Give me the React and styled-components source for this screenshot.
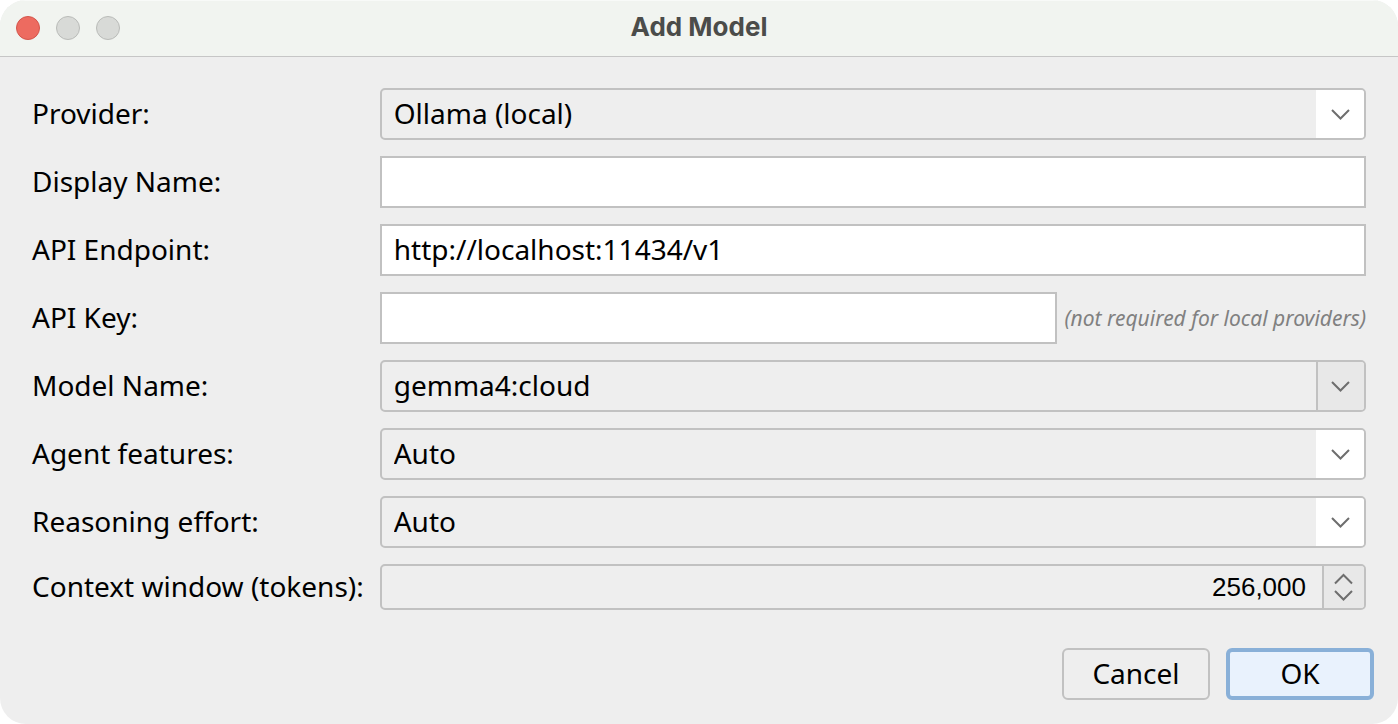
import { useState } from "react";
import styled, { createGlobalStyle, ThemeProvider } from "styled-components";

const theme = {
  colors: {
    window: "#eeeeee",
    titleBar: "#f1f4f0",
    border: "#c1c1c1",
    cell: "#e8e8e8",
    white: "#ffffff",
    text: "#000000",
    title: "#4b4c4a",
    hint: "#808080",
    arrow: "#6e6e6e",
    primary: "#e9f2fd",
    primaryBorder: "#89b0d8",
  },
  fonts: {
    form: '"Noto Sans", sans-serif',
    title: 'Inter, "Liberation Sans", sans-serif',
    number: '"Liberation Sans", Arial, sans-serif',
  },
};

const PROVIDERS = ["Ollama (local)"];
const MODELS = ["gemma4:cloud"];
const LEVELS = ["Auto"];
const TOKEN_STEP = 1000;

const Chevron = ({ up }) => (
  <svg width="20" height="12" viewBox="0 0 20 12" aria-hidden="true">
    <path
      d={up ? "M1 10.5 L9.5 2 L18 10.5" : "M1 2 L9.5 10.5 L18 2"}
      fill="none"
      stroke="currentColor"
      strokeWidth="2"
    />
  </svg>
);

const SelectField = ({ id, label, options, divided }) => {
  const [value, setValue] = useState(options[0]);

  return (
    <>
      <Label htmlFor={id}>{label}</Label>
      <SelectBox>
        <Select id={id} value={value} onChange={(e) => setValue(e.target.value)}>
          {options.map((ele) => (
            <option key={ele} value={ele}>
              {ele}
            </option>
          ))}
        </Select>
        <ArrowCell $divided={divided}>
          <Chevron />
        </ArrowCell>
      </SelectBox>
    </>
  );
};

const App = () => {
  const [name, setName] = useState("");
  const [endpoint, setEndpoint] = useState("http://localhost:11434/v1");
  const [apiKey, setApiKey] = useState("");
  const [tokens, setTokens] = useState(256000);

  const changeTokens = (e) => {
    setTokens(Number(e.target.value.replace(/\D/g, "")));
  };

  return (
    <ThemeProvider theme={theme}>
      <GlobalStyle />
      <Dialog role="dialog" aria-labelledby="dialog-title">
        <TitleBar>
          <Lights>
            <Light type="button" aria-label="Close" $active />
            <Light type="button" aria-label="Minimize" disabled />
            <Light type="button" aria-label="Zoom" disabled />
          </Lights>
          <Title id="dialog-title">Add Model</Title>
        </TitleBar>
        <form onSubmit={(e) => e.preventDefault()}>
          <Fields>
            <SelectField id="provider" label="Provider:" options={PROVIDERS} />

            <Label htmlFor="name">Display Name:</Label>
            <TextInput
              id="name"
              value={name}
              onChange={(e) => setName(e.target.value)}
            />

            <Label htmlFor="endpoint">API Endpoint:</Label>
            <TextInput
              id="endpoint"
              value={endpoint}
              onChange={(e) => setEndpoint(e.target.value)}
            />

            <Label htmlFor="key">API Key:</Label>
            <KeyRow>
              <TextInput
                id="key"
                type="password"
                aria-describedby="key-hint"
                value={apiKey}
                onChange={(e) => setApiKey(e.target.value)}
              />
              <Hint id="key-hint">(not required for local providers)</Hint>
            </KeyRow>

            <SelectField
              id="model"
              label="Model Name:"
              options={MODELS}
              divided
            />
            <SelectField id="agent" label="Agent features:" options={LEVELS} />
            <SelectField
              id="reasoning"
              label="Reasoning effort:"
              options={LEVELS}
            />

            <Label htmlFor="tokens">Context window (tokens):</Label>
            <Spinner>
              <NumberInput
                id="tokens"
                inputMode="numeric"
                value={tokens.toLocaleString("en-US")}
                onChange={changeTokens}
              />
              <Steppers>
                <Step
                  type="button"
                  aria-label="Increase"
                  onClick={() => setTokens(tokens + TOKEN_STEP)}
                >
                  <Chevron up />
                </Step>
                <Step
                  type="button"
                  aria-label="Decrease"
                  onClick={() => setTokens(Math.max(0, tokens - TOKEN_STEP))}
                >
                  <Chevron />
                </Step>
              </Steppers>
            </Spinner>
          </Fields>
          <Footer>
            <Button type="button">Cancel</Button>
            <Button type="submit" $primary>
              OK
            </Button>
          </Footer>
        </form>
      </Dialog>
    </ThemeProvider>
  );
};

const GlobalStyle = createGlobalStyle`
  * {
    box-sizing: border-box;
  }

  body {
    margin: 0;
    background-color: ${({ theme }) => theme.colors.white};
    color: ${({ theme }) => theme.colors.text};
    font-family: ${({ theme }) => theme.fonts.form};
    font-size: 28px;
    line-height: 36px;
  }

  button,
  input,
  select {
    margin: 0;
    color: inherit;
    font: inherit;
  }
`;

const Dialog = styled.main`
  overflow: hidden;
  border-radius: 26px;
  background-color: ${({ theme }) => theme.colors.window};
`;

const TitleBar = styled.header`
  display: grid;
  grid-template-columns: 1fr auto 1fr;
  align-items: center;
  height: 57px;
  padding: 0 16px 2px;
  border-top: 1px solid #f8faf8;
  border-bottom: 1px solid #c6c6c6;
  background-color: ${({ theme }) => theme.colors.titleBar};
`;

const Lights = styled.div`
  display: flex;
  gap: 16px;
`;

const Light = styled.button`
  width: 24px;
  height: 24px;
  padding: 0;
  border: 1px solid ${({ $active }) => ($active ? "#d3554b" : "#b9bbb8")};
  border-radius: 50%;
  background-color: ${({ $active }) => ($active ? "#ed6b60" : "#d8dad7")};
`;

const Title = styled.h1`
  margin: 0;
  padding-bottom: 2px;
  color: ${({ theme }) => theme.colors.title};
  font-family: ${({ theme }) => theme.fonts.title};
  font-size: 26px;
  font-weight: 700;
  line-height: 32px;
`;

const Fields = styled.div`
  display: grid;
  grid-template-columns: max-content 1fr;
  align-items: center;
  gap: 16px;
  padding: 31px 32px 0;
`;

const Label = styled.label`
  padding-bottom: 2px;
  white-space: nowrap;
`;

const TextInput = styled.input`
  width: 100%;
  min-width: 0;
  height: 52px;
  padding: 0 12px 2px;
  border: 2px solid ${({ theme }) => theme.colors.border};
  border-radius: 0;
  background-color: ${({ theme }) => theme.colors.white};
`;

const KeyRow = styled.div`
  display: flex;
  align-items: center;
  gap: 8px;
`;

const Hint = styled.span`
  flex-shrink: 0;
  color: ${({ theme }) => theme.colors.hint};
  font-size: 21px;
  font-style: italic;
`;

const SelectBox = styled.div`
  display: grid;
  grid-template-columns: 1fr auto;
  height: 52px;
  overflow: hidden;
  border: 2px solid ${({ theme }) => theme.colors.border};
  border-radius: 5px;
`;

/* the select spans both columns, so the arrow cell is clickable too */
const Select = styled.select`
  grid-area: 1 / 1 / 2 / 3;
  padding: 0 60px 2px 12px;
  border: none;
  background-color: transparent;
  appearance: none;
`;

const ArrowCell = styled.span`
  grid-area: 1 / 2;
  display: flex;
  justify-content: center;
  align-items: center;
  width: 48px;
  border-left: 2px solid
    ${({ theme, $divided }) =>
      $divided ? theme.colors.border : theme.colors.white};
  background-color: ${({ theme, $divided }) =>
    $divided ? theme.colors.cell : theme.colors.white};
  color: ${({ theme }) => theme.colors.arrow};
  pointer-events: none;
`;

const Spinner = styled.div`
  display: flex;
  height: 46px;
  overflow: hidden;
  border: 2px solid ${({ theme }) => theme.colors.border};
  border-radius: 5px;
`;

const NumberInput = styled.input`
  flex: 1;
  min-width: 0;
  padding: 0 16px;
  border: none;
  background-color: transparent;
  font-family: ${({ theme }) => theme.fonts.number};
  font-size: 26px;
  text-align: right;
`;

const Steppers = styled.div`
  display: flex;
  flex-direction: column;
  justify-content: center;
  gap: 4px;
  width: 42px;
  border-left: 2px solid ${({ theme }) => theme.colors.border};
  background-color: ${({ theme }) => theme.colors.cell};
  color: ${({ theme }) => theme.colors.arrow};
`;

const Step = styled.button`
  display: flex;
  justify-content: center;
  padding: 0;
  border: none;
  background-color: transparent;
  color: inherit;
`;

const Footer = styled.footer`
  display: flex;
  justify-content: flex-end;
  gap: 16px;
  padding: 38px 24px 24px;
`;

const Button = styled.button`
  width: 148px;
  height: 52px;
  padding: 0 0 2px;
  border: ${({ theme, $primary }) =>
    $primary
      ? `4px solid ${theme.colors.primaryBorder}`
      : `2px solid ${theme.colors.border}`};
  border-radius: 6px;
  background-color: ${({ theme, $primary }) =>
    $primary ? theme.colors.primary : theme.colors.window};
`;

export default App;
